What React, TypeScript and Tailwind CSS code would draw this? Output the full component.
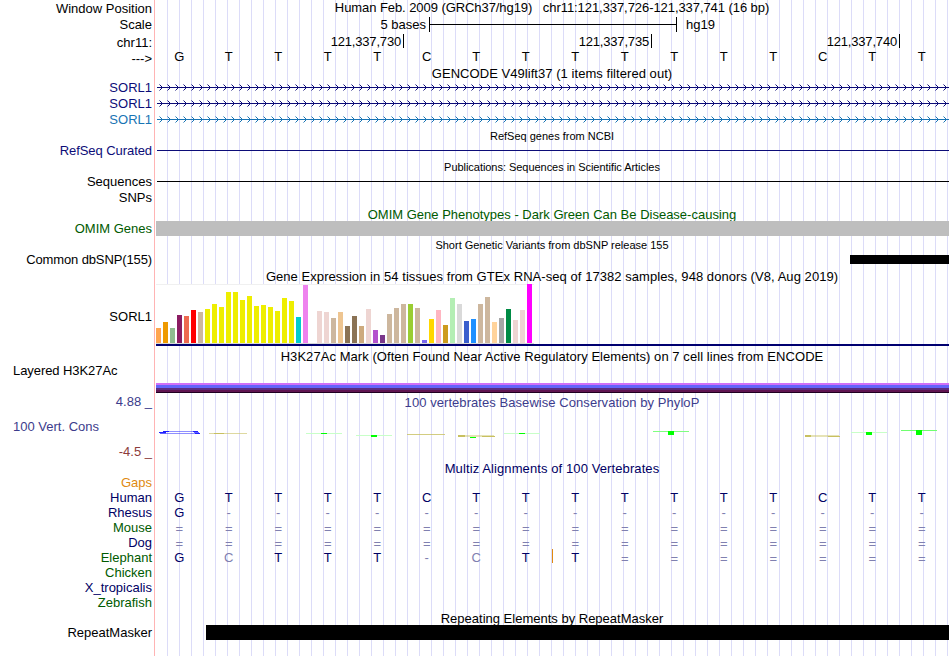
import type { ReactNode } from "react";
import { clsx } from "clsx";

const SEQUENCE = "GTTTTCTTTTTTTCTT";

const ALIGNMENTS = [
  { name: "Gaps", color: "text-[#e08a10]", bases: "" },
  { name: "Human", color: "text-[#000064]", bases: "GTTTTCTTTTTTTCTT" },
  { name: "Rhesus", color: "text-[#000064]", bases: "G---------------" },
  { name: "Mouse", color: "text-[#005a00]", bases: "================" },
  { name: "Dog", color: "text-[#000064]", bases: "================" },
  { name: "Elephant", color: "text-[#005a00]", bases: "GcTTT-cTT=======" },
  { name: "Chicken", color: "text-[#005a00]", bases: "" },
  { name: "X_tropicalis", color: "text-[#000064]", bases: "" },
  { name: "Zebrafish", color: "text-[#005a00]", bases: "" },
];

// median expression per tissue: [bar height, colour]
const TISSUES: [number, string][] = [
  [15, "#ffa54f"], [21, "#ee9a00"], [15, "#8fbc8f"], [28, "#8b1c62"], [27, "#ee6a50"],
  [33, "#ff0000"], [31, "#cdb79e"], [34, "#eeee00"], [39, "#eeee00"], [36, "#eeee00"],
  [51, "#eeee00"], [51, "#eeee00"], [43, "#eeee00"], [47, "#eeee00"], [37, "#eeee00"],
  [38, "#eeee00"], [36, "#eeee00"], [32, "#eeee00"], [45, "#eeee00"], [42, "#eeee00"],
  [26, "#00cdcd"], [58, "#ee82ee"], [0, "#9ac0cd"], [32, "#eed5d2"], [31, "#eed5d2"],
  [25, "#cdb79e"], [31, "#eec591"], [17, "#8b7355"], [27, "#8b7355"], [17, "#cdaa7d"],
  [34, "#eed5d2"], [13, "#b452cd"], [8, "#7a378b"], [29, "#cdb79e"], [35, "#cdb79e"],
  [39, "#cdb79e"], [39, "#9acd32"], [35, "#cdb79e"], [3, "#7a67ee"], [24, "#ffd700"],
  [33, "#ffb6c1"], [18, "#cd9b1d"], [45, "#b4eeb4"], [39, "#d9d9d9"], [22, "#3a5fcd"],
  [24, "#1e90ff"], [39, "#cdb79e"], [46, "#cdb79e"], [21, "#ffd39b"], [25, "#a6a6a6"],
  [34, "#008b45"], [23, "#eed5d2"], [33, "#eed5d2"], [59, "#ff00ff"],
];

interface RowProps {
  label?: string;
  labelClass?: string;
  className?: string;
  children?: ReactNode;
}

const Row = ({ label, labelClass, className, children }: RowProps) => (
  <div className={clsx("flex w-[949px]", className)}>
    <div className={clsx("w-[152px] mr-1 shrink-0 text-right leading-4", labelClass)}>{label}</div>
    <div className="w-[793px] shrink-0">{children}</div>
  </div>
);

const Title = ({ className, children }: { className?: string; children: ReactNode }) => (
  <div className={clsx("w-[792px] text-center leading-4", className)}>{children}</div>
);

const Bases = ({ bases, aligned }: { bases: string; aligned?: boolean }) => (
  <div className="grid grid-cols-16 -ml-[1.5px] mr-[2.5px] text-center leading-[14px]">
    {bases.split("").map((base, index) => (
      <span
        key={index}
        className={clsx(
          aligned && (/[GTC]/.test(base) ? "text-[#000064]" : "text-[#8080b0]"),
          aligned && (base === "=" ? "pt-[2px]" : "pt-px")
        )}
      >
        {base.toUpperCase()}
      </span>
    ))}
  </div>
);

const Transcript = ({ id, color }: { id: string; color: string }) => (
  <svg width="793" height="16" className="block" shapeRendering="crispEdges">
    <defs>
      <pattern id={id} x="1" y="0" width="8" height="16" patternUnits="userSpaceOnUse">
        <path d="M3 6h1v1h-1zM4 7h1v1h-1zM4 9h1v1h-1zM3 10h1v1h-1z" fill={color} />
        <path d="M2 5h1v1h-1zM2 11h1v1h-1z" fill={color} opacity=".5" />
      </pattern>
    </defs>
    <rect x="1" y="8" width="792" height="1" fill={color} />
    <rect x="1" width="792" height="16" fill={`url(#${id})`} />
  </svg>
);

const Expression = () => (
  <div className="h-[63px] pt-px">
    <div className="flex h-[60px] w-[378px] items-end gap-0.5 border-y border-t-[#f0f0f0] border-b-[#d8d8d8] bg-white">
      {TISSUES.map(([height, color], index) => (
        <div key={index} className="w-[5px] shrink-0" style={{ height, backgroundColor: color }} />
      ))}
    </div>
    <div className="h-0.5 bg-[#000070]" />
  </div>
);

const Conservation = () => (
  <svg width="793" height="50" className="block" shapeRendering="crispEdges">
    <g fill="#2020ff">
      <rect x="7" y="21" width="6" height="1" />
      <rect x="13" y="21" width="24" height="1" opacity=".5" />
      <rect x="37" y="21" width="5" height="1" />
      <rect x="3" y="22" width="7" height="1" />
      <rect x="38" y="22" width="5" height="1" opacity=".7" />
      <rect x="4" y="23" width="6" height="1" opacity=".7" />
      <rect x="10" y="23" width="29" height="1" opacity=".5" />
      <rect x="39" y="23" width="5" height="1" />
    </g>
    <g fill="#c8c060">
      <rect x="53" y="23" width="38" height="1" opacity=".6" />
      <rect x="58" y="23" width="10" height="1" />
      <rect x="251" y="24" width="38" height="1" opacity=".8" />
      <rect x="302" y="25" width="36" height="2" opacity=".45" />
      <rect x="302" y="25" width="7" height="2" />
      <rect x="326" y="26" width="13" height="1" />
      <rect x="649" y="25" width="34" height="2" opacity=".45" />
      <rect x="649" y="25" width="6" height="2" />
      <rect x="672" y="26" width="12" height="1" />
    </g>
    <g fill="#c8ffc8">
      <rect x="150" y="23" width="36" height="1" />
      <rect x="200" y="25" width="36" height="1" />
      <rect x="348" y="23" width="36" height="1" />
      <rect x="497" y="21" width="36" height="1" fill="#80ff80" />
      <rect x="695" y="22" width="36" height="1" />
      <rect x="745" y="20" width="36" height="1" fill="#70ff70" />
    </g>
    <g fill="#00ff00">
      <rect x="165" y="23" width="6" height="1" />
      <rect x="215" y="25" width="6" height="2" />
      <rect x="314" y="27" width="6" height="1" />
      <rect x="363" y="23" width="6" height="1" />
      <rect x="512" y="21" width="6" height="4" />
      <rect x="710" y="22" width="6" height="3" />
      <rect x="760" y="20" width="6" height="5" />
    </g>
  </svg>
);

const Ruler = () => (
  <div className="flex leading-[14px]">
    {["121,337,730", "121,337,735", "121,337,740"].map((position) => (
      <div key={position} className="flex w-[248px] justify-end gap-0.5">
        <span className="pt-px tracking-[-0.18px]">{position}</span>
        <span className="h-[14px] w-px bg-black" />
      </div>
    ))}
  </div>
);

export default function App() {
  return (
    <div className="h-[656px] w-[950px] overflow-hidden bg-white font-['Liberation_Sans',Arial,sans-serif] text-[13px] text-black whitespace-pre">
      <div className="flex h-[656px] w-[949px]">
        <div className="w-[154px] shrink-0" />
        <div className="mr-px w-px bg-[#ffb4b4]" />
        <div className="w-[793px] bg-[linear-gradient(to_right,#dcdcf8_1px,transparent_1px)] bg-[length:12px_100%] bg-[position:11px_0]" />
      </div>

      <div className="relative -mt-[656px]">
        <Row label="Window Position" labelClass="pt-px" className="h-[17px]">
          <Title className="tracking-[-0.07px]">Human Feb. 2009 (GRCh37/hg19)   chr11:121,337,726-121,337,741 (16 bp)</Title>
        </Row>
        <Row label="Scale" className="h-[17px]">
          <div className="flex h-[15px] items-center leading-4">
            <span className="w-[270px] text-right">5 bases</span>
            <span className="ml-[3px] h-[15px] w-px bg-black" />
            <span className="h-px w-[246px] bg-black" />
            <span className="h-[15px] w-px bg-black" />
            <span className="ml-[9px]">hg19</span>
          </div>
        </Row>
        <Row label="chr11:" labelClass="pt-px" className="h-4">
          <Ruler />
        </Row>
        <Row label="--->" labelClass="pt-px" className="h-4">
          <Bases bases={SEQUENCE} />
        </Row>
        <Row className="h-[13px]">
          <Title className="tracking-[0.05px]">GENCODE V49lift37 (1 items filtered out)</Title>
        </Row>
        <Row label="SORL1" labelClass="pt-px text-[#0c0c78]" className="h-4">
          <Transcript id="t1" color="#0c0c78" />
        </Row>
        <Row label="SORL1" labelClass="pt-px text-[#0c0c78]" className="h-4">
          <Transcript id="t2" color="#0c0c78" />
        </Row>
        <Row label="SORL1" labelClass="pt-px text-[#1874b4]" className="h-4">
          <Transcript id="t3" color="#1874b4" />
        </Row>

        <Row className="h-[15px]">
          <Title className="pt-px text-[11px]">RefSeq genes from NCBI</Title>
        </Row>
        <Row label="RefSeq Curated" labelClass="pt-px tracking-[-0.07px] text-[#0c0c78]" className="h-4">
          <div className="mt-2 ml-px h-px bg-[#0c0c78]" />
        </Row>
        <Row className="h-[15px]">
          <Title className="pt-px text-[11px] tracking-[-0.04px]">Publications: Sequences in Scientific Articles</Title>
        </Row>
        <Row label="Sequences" labelClass="pt-px" className="h-4">
          <div className="mt-2 ml-px h-px bg-black" />
        </Row>
        <Row label="SNPs" labelClass="pt-px" className="h-4" />

        <Row className="h-4">
          <Title className="mt-0.5 text-[#005a00]">OMIM Gene Phenotypes - Dark Green Can Be Disease-causing</Title>
        </Row>
        <Row label="OMIM Genes" labelClass="text-[#005a00]" className="h-[15px]">
          <div className="h-[15px] bg-[#bebebe]" />
        </Row>
        <Row className="h-[15px]">
          <Title className="pt-px text-[11px]">Short Genetic Variants from dbSNP release 155</Title>
        </Row>
        <Row label="Common dbSNP(155)" labelClass="pt-px tracking-[-0.12px]" className="h-4">
          <div className="mt-1 ml-[694px] h-[9px] bg-black" />
        </Row>

        <Row className="h-4">
          <Title className="pt-[2px] tracking-[0.055px]">Gene Expression in 54 tissues from GTEx RNA-seq of 17382 samples, 948 donors (V8, Aug 2019)</Title>
        </Row>
        <Row label="SORL1" labelClass="pt-[26px]" className="h-[63px]">
          <Expression />
        </Row>

        <Row className="h-4">
          <Title className="pt-[3px] tracking-[0.06px]">H3K27Ac Mark (Often Found Near Active Regulatory Elements) on 7 cell lines from ENCODE</Title>
        </Row>
        <Row label="Layered H3K27Ac" labelClass="pt-px pl-[13px] !text-left tracking-[-0.07px]" className="h-8">
          <div className="pt-[21px]">
            <div className="h-0.5 bg-[#d070f8]" />
            <div className="h-[3px] bg-[#6464fa]" />
            <div className="h-0.5 bg-[#5c2c80]" />
            <div className="h-0.5 bg-[#601450]" />
            <div className="h-px bg-[#200020]" />
          </div>
        </Row>

        <Row label="4.88 _" labelClass="text-[#3c3c8c]" className="h-4">
          <Title className="pt-px tracking-[0.06px] text-[#3c3c8c]">100 vertebrates Basewise Conservation by PhyloP</Title>
        </Row>
        <div className="flex h-[50px] w-[949px]">
          <div className="mr-1 flex w-[152px] shrink-0 flex-col pt-[9px] leading-4">
            <span className="pl-[13px] text-[#3c3c8c]">100 Vert. Cons</span>
            <span className="pt-[9px] text-right text-[#8c3c3c]">-4.5 _</span>
          </div>
          <Conservation />
        </div>

        <Row className="h-[15px]">
          <Title className="pt-px tracking-[0.1px] text-[#000064]">Multiz Alignments of 100 Vertebrates</Title>
        </Row>
        {ALIGNMENTS.map(({ name, color, bases }) => (
          <Row key={name} label={name} labelClass={color} className="h-[15px]">
            <div className="relative">
              <Bases bases={bases} aligned />
              {name === "Elephant" && <div className="absolute top-[-1px] left-[396px] h-[14px] w-px bg-[#e08a10]" />}
            </div>
          </Row>
        ))}

        <Row className="h-[15px]">
          <Title className="pt-px">Repeating Elements by RepeatMasker</Title>
        </Row>
        <Row label="RepeatMasker" className="h-[15px]">
          <div className="ml-[50px] h-[15px] bg-black" />
        </Row>
      </div>
    </div>
  );
}
